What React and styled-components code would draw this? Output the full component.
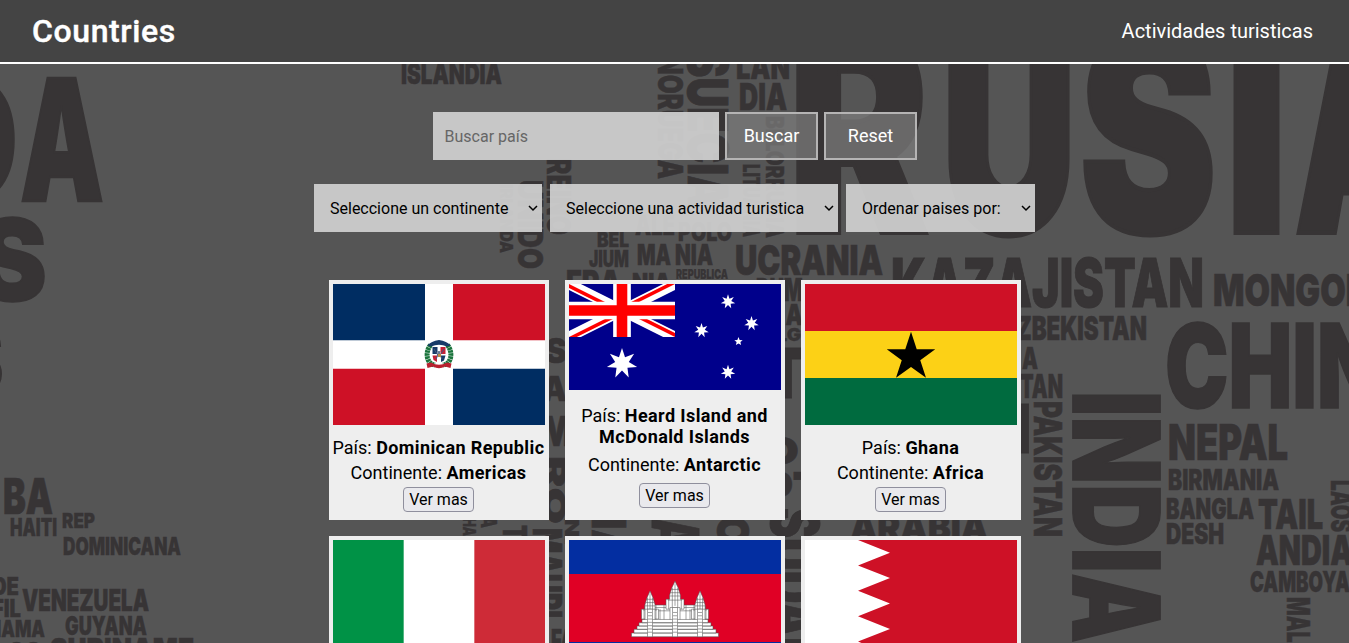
import React from "react";
import styled, { createGlobalStyle } from "styled-components";

const GlobalStyle = createGlobalStyle`
  * { box-sizing: border-box; }
  html, body { margin: 0; padding: 0; background: #555555; }
  body, button, input { font-family: Roboto, "Liberation Sans", sans-serif; }
`;

const Page = styled.div`
  position: relative;
  height: 643px;
  overflow: hidden;
  background: #555555;
`;

const Backdrop = styled.svg`
  position: absolute;
  inset: 0;
  width: 1349px;
  height: 643px;
  font-family: Inter, Roboto, sans-serif;
  font-weight: 900;
  fill: #373435;
  stroke: #373435;
`;

const Header = styled.header`
  position: relative;
  display: flex;
  align-items: center;
  justify-content: space-between;
  height: 64px;
  padding: 0 36px 0 32px;
  background: #444444;
  border-bottom: 2px solid #ffffff;
  color: #ffffff;
`;

const Title = styled.h1`
  margin: 0;
  font-size: 32px;
  font-weight: 500;
  line-height: 38px;
  letter-spacing: 0.6px;
  -webkit-text-stroke: 0.4px #ffffff;
`;

const NavLink = styled.a`
  font-size: 20px;
  line-height: 24px;
`;

const Main = styled.main`
  position: relative;
  display: flex;
  flex-direction: column;
  align-items: center;
  padding-top: 48px;
`;

const SearchRow = styled.form`
  display: flex;
  gap: 6px;
  margin-bottom: 24px;
`;

const SearchInput = styled.input`
  width: 286px;
  height: 48px;
  padding: 0 12px;
  border: 0;
  border-radius: 0;
  background: rgba(209, 209, 209, 0.92);
  font-size: 16px;
  &::placeholder { color: #666666; opacity: 1; }
`;

const ActionButton = styled.button`
  width: 93px;
  height: 48px;
  padding: 0 0 2px 1px;
  border: 2px solid #b5b4b4;
  background: rgba(124, 124, 124, 0.73);
  background-clip: padding-box;
  color: #ffffff;
  font-size: 18px;
`;

const FilterRow = styled.div`
  display: flex;
  gap: 8px;
  margin-bottom: 48px;
`;

const Select = styled.div`
  display: flex;
  align-items: center;
  justify-content: space-between;
  width: ${(p) => p.$width}px;
  height: 48px;
  padding: 0 4px 0 16px;
  background: rgba(209, 209, 209, 0.92);
  color: #000000;
  font-size: 16px;
  white-space: nowrap;
`;

const Grid = styled.section`
  display: grid;
  grid-template-columns: repeat(3, 220px);
  grid-auto-rows: 240px;
  gap: 16px;
`;

const Card = styled.article`
  display: flex;
  flex-direction: column;
  padding: 4px;
  background: #eeeeee;
  color: #000000;
`;

const Flag = styled.svg`
  display: block;
  flex: none;
  width: 212px;
  height: ${(p) => p.$height}px;
`;

const Info = styled.div`
  flex: 1;
  display: flex;
  flex-direction: column;
  align-items: center;
  justify-content: space-evenly;
  padding: ${(p) => (p.$roomy ? "7.2px 0 0.8px" : "8px 0 0")};
`;

const Line = styled.p`
  margin: 0 -4px;
  font-size: 18px;
  line-height: 21px;
  text-align: center;
  b { font-weight: 700; letter-spacing: 0.4px; }
`;

const MoreButton = styled.button`
  height: 25px;
  padding: 0 5px;
  border: 1px solid #8f8f9d;
  border-radius: 4px;
  background: #e9e9ed;
  color: #000000;
  font-size: 16px;
  line-height: 21px;
`;

// [text, left, right, top, bottom]
const ACROSS = [
  ["D", -70, 18, 77, 202], ["A", 20, 104, 77, 202], ["S", -24, 47, 217, 302], ["S", -60, 4, 325, 395],
  ["BA", 3, 53, 477, 514], ["HAITI", 10, 57, 518, 536], ["REP", 62, 95, 513, 528],
  ["DOMINICANA", 63, 181, 537, 555], ["DE", -8, 19, 577, 595], ["FIL", -8, 21, 599, 617],
  ["VENEZUELA", 22, 149, 589, 611], ["NAMA", -12, 45, 620, 637], ["GUYANA", 65, 147, 616, 635],
  ["SURINAME", 50, 194, 638, 660], ["GO", 8, 42, 642, 660],
  ["ISLANDIA", 401, 502, 63, 84], ["LAN", 736, 790, 54, 79], ["DIA", 739, 787, 83, 110],
  ["R", 788, 929, 25, 235], ["U", 941, 1077, 25, 236], ["S", 1079, 1217, 28, 235],
  ["I", 1225, 1288, 25, 235], ["A", 1294, 1430, 25, 235],
  ["BEL", 597, 629, 232, 247], ["JIUM", 589, 629, 250, 267], ["MA", 637, 671, 244, 265],
  ["NIA", 675, 713, 244, 265], ["ALE", 635, 675, 215, 235], ["POLO", 678, 732, 222, 241],
  ["REPUBLICA", 676, 728, 269, 279], ["FRA", 566, 621, 270, 296], ["NIA", 632, 671, 273, 292],
  ["UCRANIA", 735, 883, 244, 275], ["RUM", 756, 803, 278, 301], ["ANIA", 745, 803, 304, 325],
  ["BULG", 750, 801, 328, 341], ["TURQUIA", 772, 980, 348, 399],
  ["KAZAJISTAN", 891, 1204, 257, 307], ["MONGOLIA", 1213, 1400, 273, 306],
  ["UZBEKISTAN", 1000, 1147, 316, 340], ["CHINA", 1165, 1450, 322, 409],
  ["A", 1022, 1038, 347, 369], ["TAN", 1020, 1063, 374, 398], ["IRAN", 905, 1031, 403, 453],
  ["NEPAL", 1168, 1288, 423, 460], ["BIRMANIA", 1168, 1279, 469, 490], ["BANGLA", 1166, 1254, 498, 519],
  ["DESH", 1166, 1224, 523, 544], ["TAIL", 1258, 1323, 498, 529], ["ANDIA", 1256, 1353, 534, 565],
  ["CAMBOYA", 1250, 1350, 571, 592], ["ARABIA", 850, 988, 515, 540],
  ["ES", 525, 567, 338, 363], ["IA", 533, 567, 376, 401], ["MA", 540, 600, 415, 446],
  ["ECO", 700, 799, 437, 464], ["EGIPTO", 700, 850, 471, 507], ["FA", 551, 575, 629, 650],
];

// [text, left, right, top, bottom], read from top to bottom
const DOWN = [
  ["NORUEGA", 658, 683, 56, 179], ["SUECIA", 688, 729, 50, 208], ["BELORRUSIA", 766, 784, 116, 238],
  ["LITUANIA", 743, 760, 164, 237], ["REINO", 547, 571, 158, 235], ["UNIDO", 518, 543, 180, 269],
  ["IRLANDA", 500, 513, 184, 253], ["INDIA", 1072, 1161, 391, 643], ["PAKISTAN", 1034, 1062, 401, 537],
  ["LAOS", 1331, 1353, 480, 532], ["MALASIA", 1287, 1310, 597, 692],
  ["SUDAN", 771, 820, 508, 672], ["C", 717, 750, 516, 545], ["A", 652, 700, 518, 550],
  ["IA", 592, 627, 518, 560], ["HA", 463, 476, 518, 536], ["A", 481, 497, 516, 528],
  ["T", 503, 527, 525, 540], ["RO", 545, 566, 456, 524], ["MAURI", 533, 562, 528, 618],
  ["NI", 565, 579, 518, 545],
];

const CAP = 0.727;
const EDGE = 0.02;

function Word({ word, down }) {
  const [text, l, r, top, bottom] = word;
  const cap = down ? r - l : bottom - top;
  const run = down ? bottom - top : r - l;
  const edge = cap * EDGE;
  const place = down ? `translate(${l + edge / 2} ${top}) rotate(90)` : `translate(${l} ${bottom - edge / 2})`;
  return (
    <text transform={place} fontSize={(cap - edge) / CAP} strokeWidth={edge} textLength={run} lengthAdjust="spacingAndGlyphs">
      {text}
    </text>
  );
}

function WordMap() {
  return (
    <Backdrop viewBox="0 0 1349 643" aria-hidden="true">
      {ACROSS.map((w, i) => <Word key={i} word={w} />)}
      {DOWN.map((w, i) => <Word key={i} word={w} down />)}
    </Backdrop>
  );
}

function starPoints(cx, cy, outer, inner, n) {
  return Array.from({ length: n * 2 }, (_, i) => {
    const r = i % 2 ? inner : outer;
    const a = (Math.PI * i) / n - Math.PI / 2;
    return `${(cx + r * Math.cos(a)).toFixed(2)},${(cy + r * Math.sin(a)).toFixed(2)}`;
  }).join(" ");
}

const Star = ({ x, y, r, ratio = 0.45, n = 7, fill = "#fff" }) => (
  <polygon points={starPoints(x, y, r, r * ratio, n)} fill={fill} />
);

const DominicanFlag = () => (
  <Flag viewBox="0 0 212 141" $height={141}>
    <rect width="212" height="141" fill="#fff" />
    <path d="M0 0H92V56.3H0ZM120 84.7H212V141H120Z" fill="#002d62" />
    <path d="M120 0H212V56.3H120ZM0 84.7H92V141H0Z" fill="#ce1126" />
    <path d="M97.500 61Q93 67 94.500 74Q96 80 102 81M114.500 61Q119 67 117.500 74Q116 80 110 81" fill="none" stroke="#19733b" strokeWidth="5" strokeDasharray="2.500 .5" />
    <path d="M94.500 61.500Q98 57 106 56Q114 57 117.500 61.500L114 62.500Q106 59 98 62.500Z" fill="#173b68" />
    <path d="M99.500 63H112.500V74Q111 78 106 80Q101 78 99.500 74Z" fill="#fff" />
    <path d="M99.500 63H104.500V70H99.500ZM108 71.500H112.500L111 76.500L108 78Z" fill="#173b68" />
    <path d="M107.500 63H112.500V70H107.500ZM99.500 71.500H104V78L100.500 76Z" fill="#c52035" />
    <path d="M101 65L106 73L111 65M103 75L107 67M109 75L105 67" fill="none" stroke="#465779" strokeWidth="1" />
    <path d="M105 70H108V73H105Z" fill="#ba8b43" />
    <path d="M93.500 79.500L98 78.500Q106 83 114 78.500L118.500 79.500L117.500 84L112 82.500Q106 86 100 82.500L94.500 84Z" fill="#b9202f" />
  </Flag>
);

const HeardFlag = () => (
  <Flag viewBox="0 0 212 106" $height={106}>
    <defs>
      <clipPath id="canton"><path d="M0 0H106V53H0Z" /></clipPath>
      <clipPath id="saltire"><path d="M53 26.500H106V53ZM53 26.500V53H0ZM53 26.500H0V0ZM53 26.500V0H106Z" /></clipPath>
    </defs>
    <rect width="212" height="106" fill="#00008b" />
    <g clipPath="url(#canton)">
      <path d="M0 0L106 53M106 0L0 53" stroke="#fff" strokeWidth="10.600" />
      <path clipPath="url(#saltire)" d="M0 0L106 53M106 0L0 53" stroke="#f00" strokeWidth="7" />
      <path d="M53 0V53M0 26.500H106" stroke="#fff" strokeWidth="17.700" />
      <path d="M53 0V53M0 26.500H106" stroke="#f00" strokeWidth="10.600" />
    </g>
    <Star x={53} y={79.5} r={15.5} />
    <Star x={159} y={17.700} r={7.4} />
    <Star x={132.500} y={46.500} r={7.4} />
    <Star x={182.500} y={39.500} r={7.4} />
    <Star x={159} y={88.200} r={7.4} />
    <Star x={169.500} y={57.500} r={4.4} n={5} />
  </Flag>
);

const GhanaFlag = () => (
  <Flag viewBox="0 0 212 141" $height={141}>
    <rect width="212" height="141" fill="#fcd116" />
    <rect width="212" height="47" fill="#ce1126" />
    <rect y="94" width="212" height="47" fill="#006b3f" />
    <Star x={106} y={73.2} r={25.5} ratio={0.382} n={5} fill="#000" />
  </Flag>
);

const ItalyFlag = () => (
  <Flag viewBox="0 0 212 141" $height={141}>
    <rect width="212" height="141" fill="#fff" />
    <rect width="70.670" height="141" fill="#009246" />
    <rect x="141.330" width="70.670" height="141" fill="#ce2b37" />
  </Flag>
);

const Tower = ({ x, top, w }) => (
  <g>
    <path d={`M${x} ${top}L${x + w * 0.35} ${top + 8}L${x + w * 0.6} ${top + 17}V${top + 22}H${x + w}V${top + 34}H${x - w}V${top + 22}H${x - w * 0.6}V${top + 17}L${x - w * 0.35} ${top + 8}Z`} />
    <path d={`M${x - w * 0.4} ${top + 10}H${x + w * 0.4}M${x - w * 0.5} ${top + 14}H${x + w * 0.5}M${x - w * 0.6} ${top + 18}H${x + w * 0.6}M${x - w * 0.8} ${top + 23}H${x + w * 0.8}M${x} ${top + 3}V${top + 30}M${x - w * 0.3} ${top + 8}V${top + 34}M${x + w * 0.3} ${top + 8}V${top + 34}M${x - w * 0.7} ${top + 22}V${top + 34}M${x + w * 0.7} ${top + 22}V${top + 34}`} />
  </g>
);

const CambodiaFlag = () => (
  <Flag viewBox="0 0 212 136" $height={136}>
    <rect width="212" height="136" fill="#032ea1" />
    <rect y="34" width="212" height="68" fill="#e00025" />
    <g fill="#fff" stroke="#555" strokeWidth=".6" transform="scale(1 .8235)">
      <path d="M76 79H136V98H76Z" />
      <path d="M75 82H137M75 86H137M79 79V97M83 84V97M87 79V97M91 84V97M95 79V97M117 79V97M121 84V97M125 79V97M129 84V97M133 79V97" />
      <Tower x={81} top={62} w={8.5} />
      <Tower x={131} top={62} w={8.5} />
      <Tower x={106} top={50} w={9} />
      <path d="M76 84H86V98H76ZM126 84H136V98H126ZM101 82H111V98H101Z" />
      <path d="M73 97H139V101H73ZM70 101H142V105H70ZM68 105H144V109H68ZM65 109H147V113.500H65ZM62.500 113.500H149.500V118H62.500Z" transform="translate(0 -.5)" />
      <path d="M78.500 84V117.500H83.500V84ZM103.500 82V117.500H108.500V82ZM128.500 84V117.500H133.500V84Z" />
      <path d="M79 88H83M79 92H83M79 96H83M79 100H83M79 104H83M79 108H83M79 112H83M104 88H108M104 92H108M104 96H108M104 100H108M104 104H108M104 108H108M104 112H108M129 88H133M129 92H133M129 96H133M129 100H133M129 104H133M129 108H133M129 112H133" />
    </g>
    <rect y="102" width="212" height="34" fill="#032ea1" />
  </Flag>
);

const BahrainFlag = () => (
  <Flag viewBox="0 0 212 127" $height={127}>
    <rect width="212" height="127" fill="#fff" />
    <path d="M212 0H53L85 12.700L53 25.400L85 38.100L53 50.800L85 63.500L53 76.200L85 88.900L53 101.600L85 114.300L53 127H212Z" fill="#ce1126" />
  </Flag>
);

const COUNTRIES = [
  { name: "Dominican Republic", continent: "Americas", FlagArt: DominicanFlag },
  { name: "Heard Island and McDonald Islands", continent: "Antarctic", FlagArt: HeardFlag, roomy: true },
  { name: "Ghana", continent: "Africa", FlagArt: GhanaFlag },
  { name: "Italy", continent: "Europe", FlagArt: ItalyFlag },
  { name: "Cambodia", continent: "Asia", FlagArt: CambodiaFlag },
  { name: "Bahrain", continent: "Asia", FlagArt: BahrainFlag },
];

const FILTERS = [
  { label: "Seleccione un continente", width: 228 },
  { label: "Seleccione una actividad turistica", width: 288 },
  { label: "Ordenar paises por:", width: 189 },
];

const Chevron = () => (
  <svg width="10" height="8" viewBox="0 0 10 8" fill="none" stroke="#000" strokeWidth="1.500">
    <path d="M1 2L5 6L9 2" />
  </svg>
);

export default function App() {
  return (
    <Page>
      <GlobalStyle />
      <WordMap />
      <Header>
        <Title>Countries</Title>
        <NavLink>Actividades turisticas</NavLink>
      </Header>
      <Main>
        <SearchRow>
          <SearchInput placeholder="Buscar país" />
          <ActionButton type="button">Buscar</ActionButton>
          <ActionButton type="button">Reset</ActionButton>
        </SearchRow>
        <FilterRow>
          {FILTERS.map((f) => (
            <Select key={f.label} $width={f.width}>{f.label}<Chevron /></Select>
          ))}
        </FilterRow>
        <Grid>
          {COUNTRIES.map(({ name, continent, FlagArt, roomy }) => (
            <Card key={name}>
              <FlagArt />
              <Info $roomy={roomy}>
                <Line>País: <b>{name}</b></Line>
                <Line>Continente: <b>{continent}</b></Line>
                <MoreButton>Ver mas</MoreButton>
              </Info>
            </Card>
          ))}
        </Grid>
      </Main>
    </Page>
  );
}
